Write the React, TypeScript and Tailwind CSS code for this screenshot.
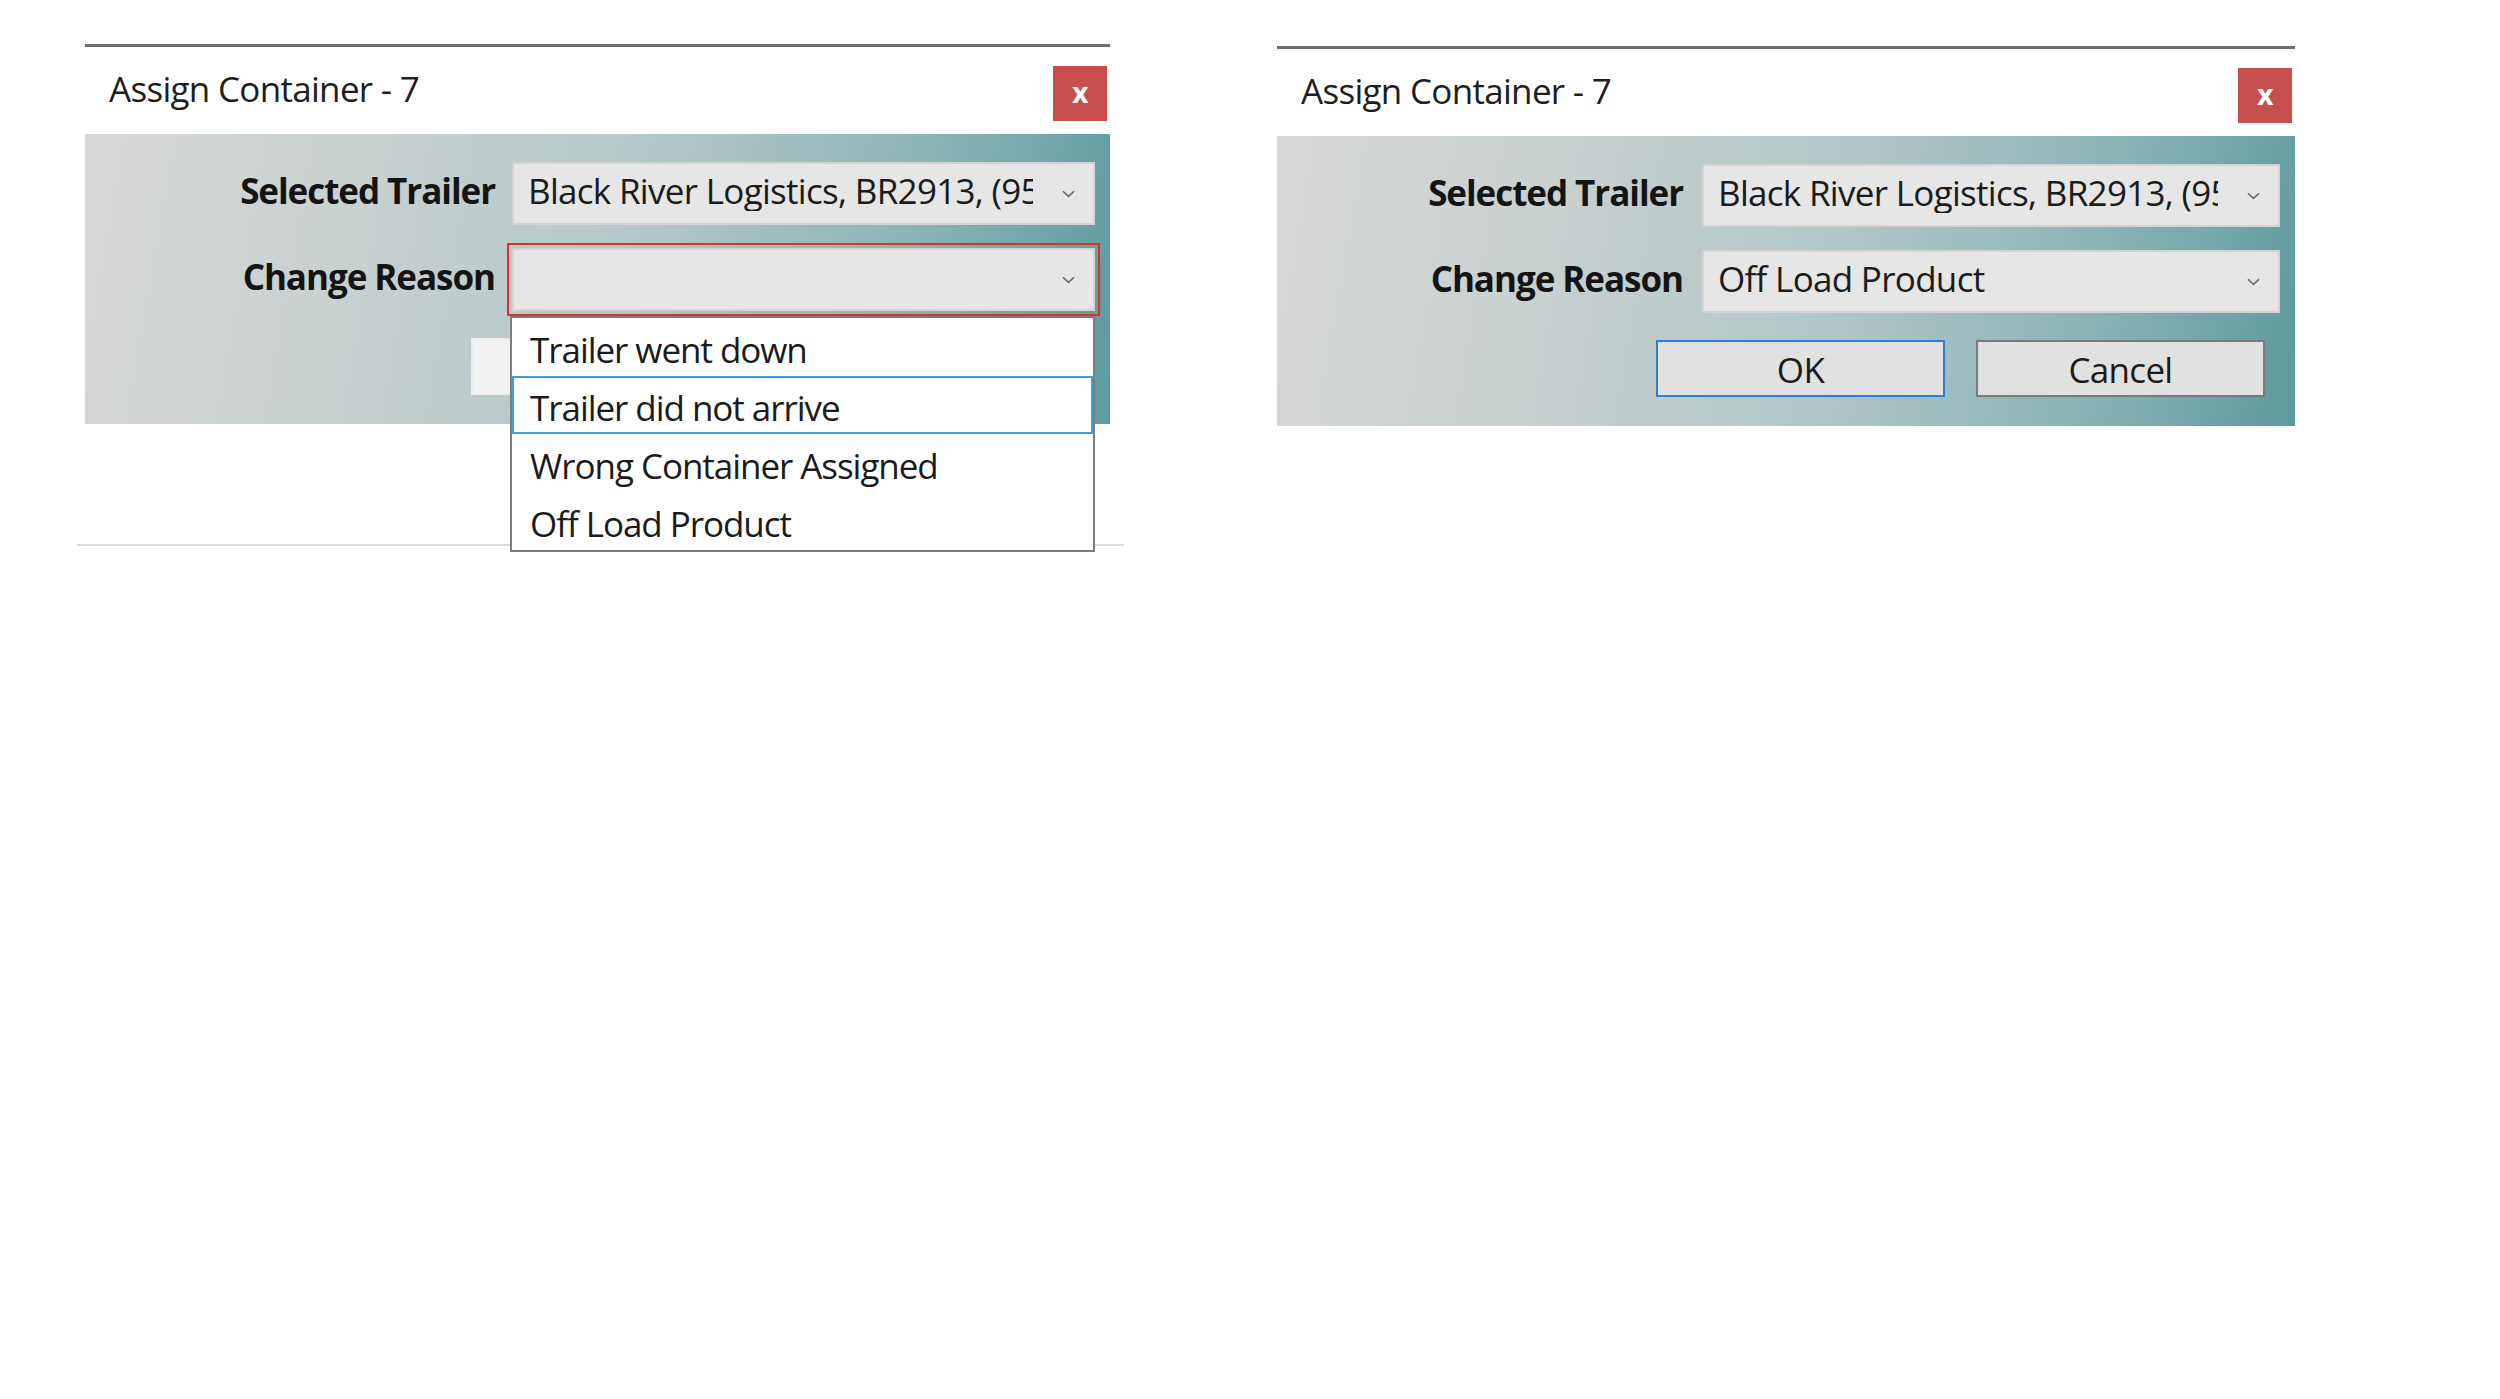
import React from "react";

const reasons = [
  "Trailer went down",
  "Trailer did not arrive",
  "Wrong Container Assigned",
  "Off Load Product",
];

function Chevron() {
  return (
    <svg width="13" height="8" viewBox="0 0 13 8" className="shrink-0">
      <path d="M1 1.2l5.5 5.2L12 1.2" fill="none" stroke="#666" strokeWidth="1.5" />
    </svg>
  );
}

function Combo({
  value,
  focused,
  open,
}: {
  value?: string;
  focused?: boolean;
  open?: boolean;
}) {
  return (
    <div
      className={`relative flex h-[63px] min-w-0 items-center border-2 border-[#d3d3d3] bg-[#e6e6e6] pl-[14px] pr-[18px] ${
        focused ? "outline-2 outline-offset-[3px] outline-[#d8322f]" : ""
      }`}
    >
      <span className="mb-[6px] mr-[29px] min-w-0 flex-1 overflow-hidden whitespace-nowrap leading-[40px] text-[#1b1b1b]">
        {value}
      </span>
      <Chevron />

      {/* 펼쳐진 목록 */}
      {open && (
        <div className="absolute left-[-4px] top-[calc(100%+7px)] z-10 w-[585px] border-2 border-[#7d7d7d] bg-white">
          {reasons.map((r, i) => (
            <div
              key={r}
              className={`flex h-[58px] items-center border-2 pl-[16px] pt-[6px] leading-[40px] tracking-[-0.03em] text-[#1b1b1b] ${
                i === 1 ? "border-[#3d9ee2]" : "border-transparent"
              }`}
            >
              {r}
            </div>
          ))}
        </div>
      )}
    </div>
  );
}

function Dialog({
  width,
  cols,
  reason,
  open,
}: {
  width: string;
  cols: string;
  reason?: string;
  open?: boolean;
}) {
  return (
    <div className={width}>
      <div className="h-[3px] bg-[#6f6f6f]" />

      {/* 타이틀 바 */}
      <div className="flex h-[86px] items-start justify-between">
        <div className="pl-[24px] pt-[22px] leading-[40px] text-[#1e1e1e]">Assign Container - 7</div>
        <button className="mr-[3px] mt-[19px] flex h-[55px] w-[54px] items-center justify-center bg-[#c94f4f] pb-[4px] text-[28px] font-bold leading-none text-white">
          x
        </button>
      </div>

      {/* 본문 */}
      <div className="mt-[1px] bg-[linear-gradient(100deg,#d7d7d7_0%,#c8d0d0_28%,#b2c6c7_55%,#89b3b4_80%,#5e9a9d_100%)] pb-[29px] pr-[15px] pt-[28px]">
        <div className={`grid items-center gap-y-[23px] ${cols}`}>
          <div className="pb-[6px] text-right font-bold leading-[40px] tracking-[-0.03em] text-[#141414]">
            Selected Trailer
          </div>
          <Combo value="Black River Logistics, BR2913, (953) 000-0000" />
          <div className="pb-[6px] text-right font-bold leading-[40px] tracking-[-0.03em] text-[#141414]">
            Change Reason
          </div>
          <Combo value={reason} focused={open} open={open} />
        </div>

        <div className="mt-[27px] flex justify-end gap-[31px] pr-[15px]">
          <button
            className={`h-[57px] w-[289px] border-2 pt-[2px] leading-[40px] text-[#1b1b1b] ${
              open ? "border-[#ececec] bg-[#f1f1f1]" : "border-[#2a7fd8] bg-[#e1e1e1]"
            }`}
          >
            OK
          </button>
          <button
            className={`h-[57px] w-[289px] border-2 pt-[2px] leading-[40px] text-[#1b1b1b] ${
              open ? "border-[#ececec] bg-[#f1f1f1]" : "border-[#7a7a7a] bg-[#e1e1e1]"
            }`}
          >
            Cancel
          </button>
        </div>
      </div>

      {open && (
        <>
          <div className="h-[120px]" />
          <div className="-ml-[8px] h-[2px] w-[1047px] bg-[#dcdcdc]" />
        </>
      )}
    </div>
  );
}

export default function App() {
  return (
    <div className="flex min-h-screen items-start gap-[167px] bg-white pl-[85px] pt-[44px] font-['Open_Sans','Noto_Sans',sans-serif] text-[35px] tracking-[-0.02em]">
      <Dialog width="w-[1025px]" cols="grid-cols-[410px_minmax(0,1fr)] gap-x-[17px]" open />
      <div className="mt-[2px]">
        <Dialog
          width="w-[1018px]"
          cols="grid-cols-[406px_minmax(0,1fr)] gap-x-[19px]"
          reason="Off Load Product"
        />
      </div>
    </div>
  );
}
